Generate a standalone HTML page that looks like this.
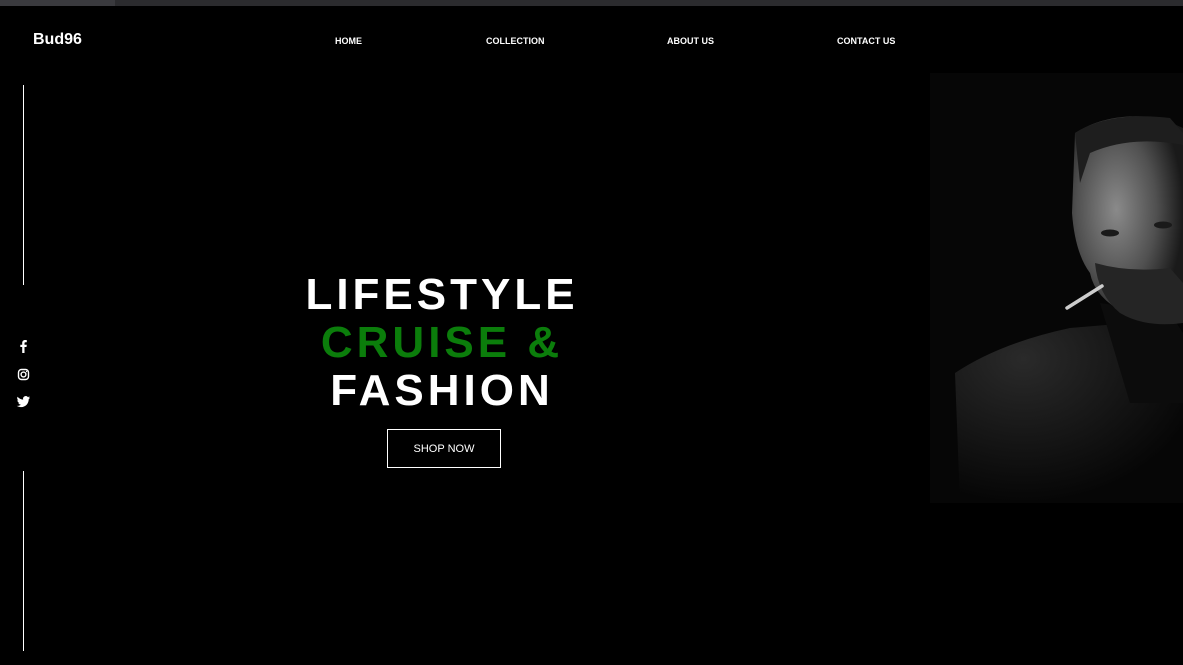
<!DOCTYPE html>
<html><head><style>
*{margin:0;padding:0;box-sizing:border-box}
body{width:1183px;height:665px;background:#000;overflow:hidden;position:relative;font-family:"Liberation Sans",Arial,sans-serif;color:#fff}
.top{position:absolute;left:0;top:0;width:1183px;height:6px;background:#2b2b2e}
.top:before{content:"";position:absolute;left:0;top:0;width:115px;height:6px;background:#3a3a3e}
.logo{position:absolute;left:33px;top:31px;font-size:16px;font-weight:bold}
.nav a{position:absolute;top:36px;font-size:9px;font-weight:bold;color:#fff;text-decoration:none}
.vl{position:absolute;left:23px;width:1px;background:#fff}
.h{position:absolute;left:242px;width:400px;text-align:center;font-size:44px;font-weight:bold;letter-spacing:4px;line-height:49px}
.btn{position:absolute;left:387px;top:429px;width:114px;height:39px;border:1px solid #fff;font-size:11px;text-align:center;line-height:39px}
.photo{position:absolute;left:930px;top:73px;width:253px;height:430px;background:#060606}
</style></head><body>
<div class="top"></div>
<div class="logo">Bud96</div>
<div class="nav"><a style="left:335px">HOME</a><a style="left:486px">COLLECTION</a><a style="left:667px">ABOUT US</a><a style="left:837px">CONTACT US</a></div>
<div class="vl" style="top:85px;height:200px"></div>
<div class="vl" style="top:471px;height:180px"></div>
<svg style="position:absolute;left:16px;top:338px" width="16" height="74" viewBox="0 0 16 74">
<path d="M8.5 15V9h2l.3-2.3H8.5V5.3c0-.7.2-1.1 1.1-1.1h1.2V2.1c-.2 0-.9-.1-1.8-.1C7.300 2 6.200 3.100 6.200 5v1.700H4.300V9h1.900v6z" fill="#fff"/>
<rect x="2.5" y="31.5" width="10" height="10" rx="3" fill="none" stroke="#fff" stroke-width="1.4"/>
<circle cx="7.5" cy="36.5" r="2.4" fill="none" stroke="#fff" stroke-width="1.4"/>
<circle cx="10.6" cy="33.5" r=".7" fill="#fff"/>
<path d="M14 59.5c-.5.2-1 .4-1.6.4.6-.3 1-.9 1.2-1.5-.5.3-1.1.5-1.7.7a2.7 2.7 0 0 0-4.7 2.5c-2.3-.1-4.3-1.2-5.6-2.9-.8 1.3-.3 2.9.9 3.7-.4 0-.9-.1-1.2-.3 0 1.3.9 2.4 2.2 2.7-.4.1-.8.1-1.2 0 .3 1.1 1.4 1.9 2.6 1.9-1.2.9-2.7 1.3-4.1 1.2 1.2.8 2.7 1.2 4.2 1.2 5 0 7.8-4.2 7.7-7.9.5-.4 1-.9 1.3-1.4z" fill="#fff"/>
</svg>
<div class="h" style="top:270px">LIFESTYLE</div>
<div class="h" style="top:318px;color:#0b7d0b">CRUISE &amp;</div>
<div class="h" style="top:366px">FASHION</div>
<div class="btn">SHOP NOW</div>
<div class="photo">
<svg width="253" height="430" viewBox="0 0 253 430">
<defs><radialGradient id="f" cx="0.4" cy="0.45" r="0.6"><stop offset="0" stop-color="#8a8a8a"/><stop offset="0.6" stop-color="#505050"/><stop offset="1" stop-color="#1a1a1a"/></radialGradient>
<radialGradient id="j" cx="0.3" cy="0.2" r="0.8"><stop offset="0" stop-color="#2a2a2a"/><stop offset="1" stop-color="#060606"/></radialGradient></defs>
<path d="M25 300 Q70 270 140 255 L200 250 L253 270 L253 430 L30 430 Z" fill="url(#j)"/>
<path d="M170 230 L240 240 L253 260 L253 330 L200 330 Z" fill="#0c0c0c"/>
<path d="M145 60 Q180 38 230 45 L253 55 L253 250 Q220 250 195 240 Q165 225 160 200 Q145 180 142 140 Z" fill="url(#f)"/>
<path d="M145 60 Q180 38 240 45 L253 60 L253 72 Q200 62 160 80 L150 110 Z" fill="#1e1e1e"/>
<path d="M165 190 Q200 200 240 195 L253 210 L253 250 Q215 255 190 240 Q168 222 165 190Z" fill="#252525"/>
<path d="M137 235 L172 213" stroke="#ccc" stroke-width="3.5" stroke-linecap="round"/>
<ellipse cx="180" cy="160" rx="9" ry="3.5" fill="#1a1a1a"/><ellipse cx="233" cy="152" rx="9" ry="3.5" fill="#1a1a1a"/>
</svg>
</div>
</body></html>
